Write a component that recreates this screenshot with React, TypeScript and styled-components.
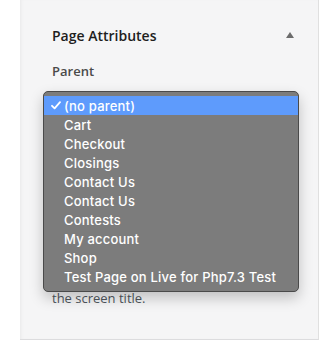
import React from "react";
import styled, { createGlobalStyle } from "styled-components";

const Global = createGlobalStyle`
  html, body { margin: 0; padding: 0; background: #ffffff; }
  body { width: 323px; height: 343px; overflow: hidden; }
`;

const Page = styled.div`
  display: flex;
  width: 323px;
  height: 343px;
  background: #ffffff;
`;

const Gutter = styled.div`
  width: 20px;
  flex: none;
`;

const Sidebar = styled.div`
  width: 299px;
  flex: none;
  height: 340px;
  background: #f5f5f6;
  border-right: 1px solid #e0e0e0;
  border-bottom: 1px solid #dcdcde;
  box-shadow: inset 3px 0 4px -3px rgba(0, 0, 0, 0.08);
  padding: 22px 0 0 32px;
  box-sizing: border-box;
  font-family: "Open Sans", "Noto Sans", sans-serif;
  color: #1e1e1e;
`;

const Header = styled.div`
  display: flex;
  align-items: center;
  justify-content: space-between;
  padding-right: 24px;
  height: 26px;
`;

const Title = styled.h2`
  margin: 0;
  font-size: 14px;
  font-weight: 600;
  color: #1e1e1e;
`;

const Arrow = styled.span`
  width: 0;
  height: 0;
  border-left: 4.5px solid transparent;
  border-right: 4.5px solid transparent;
  border-bottom: 6px solid #6c6c6c;
`;

const Label = styled.div`
  margin-top: 14px;
  font-size: 13px;
  font-weight: 600;
  color: #4a4a4a;
  height: 18px;
  line-height: 18px;
`;

const Help = styled.p`
  margin: 0;
  padding-top: 209px;
  font-size: 13px;
  line-height: 18px;
  color: #50575e;
`;

const Menu = styled.ul`
  position: absolute;
  left: 43px;
  top: 91px;
  width: 256px;
  margin: 0;
  padding: 4px 0 5px;
  box-sizing: border-box;
  list-style: none;
  background: #7c7c7c;
  border: 1px solid #4a4a4a;
  border-radius: 5px;
  box-shadow: 0 6px 14px rgba(0, 0, 0, 0.22);
  font-family: Inter, "Noto Sans", sans-serif;
  font-size: 13px;
  font-weight: 500;
  color: #ffffff;
`;

const Item = styled.li<{ $active?: boolean }>`
  display: flex;
  align-items: center;
  height: 19px;
  padding-left: 4px;
  background: ${(p) => (p.$active ? "#5e9bfc" : "transparent")};
  white-space: nowrap;
`;

const Check = styled.span`
  width: 16px;
  display: flex;
  align-items: center;
  justify-content: center;
`;

const ItemText = styled.span`
  letter-spacing: 0.2px;
`;

const items = [
  "(no parent)",
  "Cart",
  "Checkout",
  "Closings",
  "Contact Us",
  "Contact Us",
  "Contests",
  "My account",
  "Shop",
  "Test Page on Live for Php7.3 Test",
];

export default function App() {
  return (
    <>
      <Global />
      <Page>
        <Gutter />
        <Sidebar>
          <Header>
            <Title>Page Attributes</Title>
            <Arrow />
          </Header>
          <Label>Parent</Label>
          <Help>the screen title.</Help>
        </Sidebar>
      </Page>
      <Menu>
        {items.map((t, i) => (
          <Item key={i} $active={i === 0}>
            <Check>
              {i === 0 && (
                <svg width="10" height="9" viewBox="0 0 10 9">
                  <path d="M1 4.8 L3.6 7.4 L9 1.2" fill="none" stroke="#fff" strokeWidth="1.8" strokeLinecap="round" strokeLinejoin="round" />
                </svg>
              )}
            </Check>
            <ItemText>{t}</ItemText>
          </Item>
        ))}
      </Menu>
    </>
  );
}
